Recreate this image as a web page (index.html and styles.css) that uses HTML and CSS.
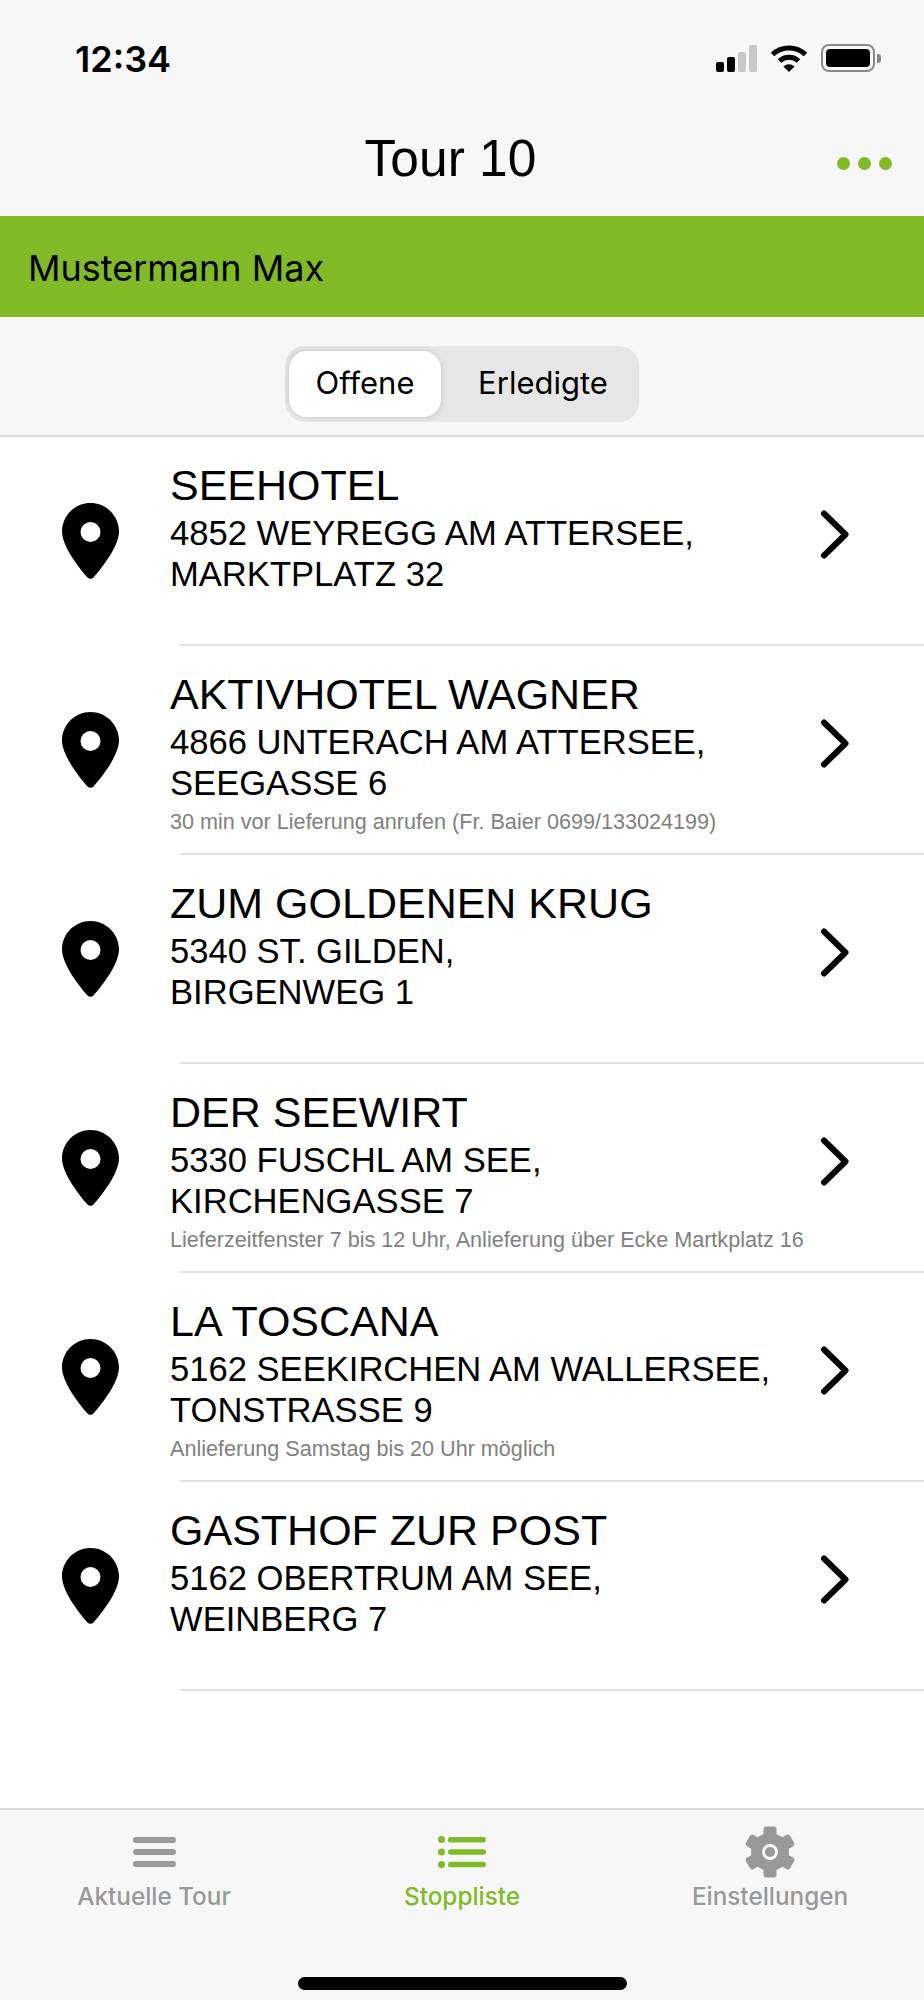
FILE: index.html
```html
<!DOCTYPE html>
<html>
  <head>
    <meta charset="UTF-8" />
    <title>Tour 10</title>
    <link rel="stylesheet" href="styles.css">
  </head>
  <body>
    <div class="app">
      <div class="status-bar">
        <span class="time">12:34</span>
        <div class="status-icons">
          <div class="signal">
            <span class="bar bar-1"></span>
            <span class="bar bar-2"></span>
            <span class="bar bar-3"></span>
            <span class="bar bar-4"></span>
          </div>
          <svg class="wifi" width="38" height="28" viewBox="0 0 38 28">
            <path d="M2.5 10.5A24 24 0 0 1 35.5 10.5" fill="none" stroke="#000" stroke-width="5" />
            <path d="M9.5 17A14 14 0 0 1 28.5 17" fill="none" stroke="#000" stroke-width="5" />
            <path d="M19 28L13.5 22.5A8 8 0 0 1 24.5 22.5Z" fill="#000" />
          </svg>
          <div class="battery"><span class="battery-level"></span></div>
          <span class="battery-nub"></span>
        </div>
      </div>

      <div class="nav-bar">
        <h1>Tour 10</h1>
        <div class="more"><span></span><span></span><span></span></div>
      </div>

      <div class="driver">Mustermann Max</div>

      <div class="filter">
        <div class="segments">
          <div class="segment active">Offene</div>
          <div class="segment">Erledigte</div>
        </div>
      </div>

      <div class="stops">
        <div class="stop">
          <svg class="pin" width="57" height="76" viewBox="0 0 57 76"><use href="#pin-shape" /></svg>
          <div class="stop-text">
            <div class="stop-name">SEEHOTEL</div>
            <div class="stop-address">4852 WEYREGG AM ATTERSEE,<br />MARKTPLATZ 32</div>
          </div>
          <svg class="chevron" width="30" height="49" viewBox="0 0 30 49"><use href="#chevron-shape" /></svg>
        </div>
        <div class="divider"></div>

        <div class="stop">
          <svg class="pin" width="57" height="76" viewBox="0 0 57 76"><use href="#pin-shape" /></svg>
          <div class="stop-text">
            <div class="stop-name">AKTIVHOTEL WAGNER</div>
            <div class="stop-address">4866 UNTERACH AM ATTERSEE,<br />SEEGASSE 6</div>
            <div class="stop-note">30 min vor Lieferung anrufen (Fr. Baier 0699/133024199)</div>
          </div>
          <svg class="chevron" width="30" height="49" viewBox="0 0 30 49"><use href="#chevron-shape" /></svg>
        </div>
        <div class="divider"></div>

        <div class="stop">
          <svg class="pin" width="57" height="76" viewBox="0 0 57 76"><use href="#pin-shape" /></svg>
          <div class="stop-text">
            <div class="stop-name">ZUM GOLDENEN KRUG</div>
            <div class="stop-address">5340 ST. GILDEN,<br />BIRGENWEG 1</div>
          </div>
          <svg class="chevron" width="30" height="49" viewBox="0 0 30 49"><use href="#chevron-shape" /></svg>
        </div>
        <div class="divider"></div>

        <div class="stop">
          <svg class="pin" width="57" height="76" viewBox="0 0 57 76"><use href="#pin-shape" /></svg>
          <div class="stop-text">
            <div class="stop-name">DER SEEWIRT</div>
            <div class="stop-address">5330 FUSCHL AM SEE,<br />KIRCHENGASSE 7</div>
            <div class="stop-note">Lieferzeitfenster 7 bis 12 Uhr, Anlieferung über Ecke Martkplatz 16</div>
          </div>
          <svg class="chevron" width="30" height="49" viewBox="0 0 30 49"><use href="#chevron-shape" /></svg>
        </div>
        <div class="divider"></div>

        <div class="stop">
          <svg class="pin" width="57" height="76" viewBox="0 0 57 76"><use href="#pin-shape" /></svg>
          <div class="stop-text">
            <div class="stop-name">LA TOSCANA</div>
            <div class="stop-address">5162 SEEKIRCHEN AM WALLERSEE,<br />TONSTRASSE 9</div>
            <div class="stop-note">Anlieferung Samstag bis 20 Uhr möglich</div>
          </div>
          <svg class="chevron" width="30" height="49" viewBox="0 0 30 49"><use href="#chevron-shape" /></svg>
        </div>
        <div class="divider"></div>

        <div class="stop">
          <svg class="pin" width="57" height="76" viewBox="0 0 57 76"><use href="#pin-shape" /></svg>
          <div class="stop-text">
            <div class="stop-name">GASTHOF ZUR POST</div>
            <div class="stop-address">5162 OBERTRUM AM SEE,<br />WEINBERG 7</div>
          </div>
          <svg class="chevron" width="30" height="49" viewBox="0 0 30 49"><use href="#chevron-shape" /></svg>
        </div>
        <div class="divider"></div>
      </div>

      <div class="tab-bar">
        <div class="tabs">
          <div class="tab">
            <div class="tab-icon">
              <svg width="43" height="30" viewBox="0 0 43 30" fill="#999">
                <rect x="0" y="0" width="43" height="6" rx="3" />
                <rect x="0" y="12" width="43" height="6" rx="3" />
                <rect x="0" y="24" width="43" height="6" rx="3" />
              </svg>
            </div>
            <span class="tab-label">Aktuelle Tour</span>
          </div>
          <div class="tab tab-active">
            <div class="tab-icon">
              <svg width="48" height="32" viewBox="0 0 48 32" fill="#80ba27">
                <circle cx="3.5" cy="3.5" r="3.5" />
                <circle cx="3.5" cy="16" r="3.5" />
                <circle cx="3.5" cy="28.5" r="3.5" />
                <rect x="10" y="1" width="38" height="5.5" rx="2.7" />
                <rect x="10" y="13.2" width="38" height="5.5" rx="2.7" />
                <rect x="10" y="25.7" width="38" height="5.5" rx="2.7" />
              </svg>
            </div>
            <span class="tab-label">Stoppliste</span>
          </div>
          <div class="tab">
            <div class="tab-icon">
              <svg width="52" height="52" viewBox="-26 -26 52 52" fill="#999">
                <circle r="19" />
                <rect x="-6.5" y="-25.5" width="13" height="14" rx="3" />
                <rect x="-6.5" y="-25.5" width="13" height="14" rx="3" transform="rotate(60)" />
                <rect x="-6.5" y="-25.5" width="13" height="14" rx="3" transform="rotate(120)" />
                <rect x="-6.5" y="-25.5" width="13" height="14" rx="3" transform="rotate(180)" />
                <rect x="-6.5" y="-25.5" width="13" height="14" rx="3" transform="rotate(240)" />
                <rect x="-6.5" y="-25.5" width="13" height="14" rx="3" transform="rotate(300)" />
                <circle r="6.5" fill="none" stroke="#f7f7f7" stroke-width="3" />
              </svg>
            </div>
            <span class="tab-label">Einstellungen</span>
          </div>
        </div>
        <div class="home-indicator"></div>
      </div>
    </div>

    <svg class="defs" width="0" height="0">
      <defs>
        <path id="pin-shape" fill-rule="evenodd" d="M28.5 0C12.8 0 0 12.8 0 28.5C0 43 17 65 25.5 74.5A4 4 0 0 0 31.5 74.5C40 65 57 43 57 28.5C57 12.8 44.2 0 28.5 0ZM28.5 19A10 10 0 1 1 28.5 39A10 10 0 1 1 28.5 19Z" />
        <path id="chevron-shape" d="M4 3.5L25.5 24.5L4 45.5" fill="none" stroke="#000" stroke-width="6" stroke-linecap="round" stroke-linejoin="round" />
      </defs>
    </svg>
  </body>
</html>
```

FILE: styles.css
```css
* {
  box-sizing: border-box;
}

body {
  margin: 0;
  font-family: "Liberation Sans", Arial, sans-serif;
  color: black;
  background-color: white;
}

.app {
  width: 924px;
  height: 2000px;
  display: flex;
  flex-direction: column;
}

.defs {
  display: block;
}

/* top bars */

.status-bar {
  height: 100px;
  padding: 44px 43px 0 75px;
  display: flex;
  justify-content: space-between;
  align-items: flex-start;
  background-color: #f7f7f7;
}

.time {
  font-family: Inter, sans-serif;
  font-size: 36px;
  font-weight: 600;
  line-height: 30px;
}

.status-icons {
  display: flex;
  align-items: center;
  height: 28px;
}

.signal {
  display: flex;
  align-items: flex-end;
  gap: 3px;
  height: 28px;
  margin-right: 13px;
}

.bar {
  width: 8px;
  border-radius: 2px;
  background-color: black;
}

.bar-1 {
  height: 10px;
}

.bar-2 {
  height: 15px;
}

.bar-3 {
  height: 20px;
  background-color: #c8c8c8;
}

.bar-4 {
  height: 27px;
  background-color: #c8c8c8;
}

.wifi {
  margin-right: 13px;
}

.battery {
  width: 54px;
  height: 28px;
  padding: 3px;
  border: 2px solid #8a8a8a;
  border-radius: 8px;
}

.battery-level {
  display: block;
  height: 100%;
  border-radius: 4px;
  background-color: black;
}

.battery-nub {
  width: 4px;
  height: 9px;
  margin-left: 2px;
  border-radius: 0 3px 3px 0;
  background-color: #8a8a8a;
}

.nav-bar {
  height: 116px;
  display: flex;
  justify-content: center;
  position: relative;
  background-color: #f7f7f7;
}

h1 {
  margin: 0 23px 0 0;
  font-size: 51.5px;
  font-weight: normal;
  line-height: 116px;
  height: 116px;
}

.more {
  position: absolute;
  right: 32px;
  top: 57px;
  display: flex;
  gap: 8px;
}

.more span {
  width: 13px;
  height: 13px;
  border-radius: 50%;
  background-color: #80ba27;
}

.driver {
  height: 101px;
  padding: 3px 0 0 28px;
  font-family: Inter, sans-serif;
  font-size: 36px;
  line-height: 98px;
  background-color: #80ba27;
}

.filter {
  height: 120px;
  padding-top: 29px;
  display: flex;
  justify-content: center;
  background-color: #f7f7f7;
  border-bottom: 2px solid #dcdcdc;
}

.segments {
  width: 354px;
  height: 76px;
  padding: 5px 4px;
  display: flex;
  border-radius: 20px;
  background-color: #e6e6e6;
}

.segment {
  flex: 1;
  padding-left: 10px;
  font-family: Inter, sans-serif;
  font-size: 31px;
  line-height: 64px;
  text-align: center;
}

.segment.active {
  flex: 0 0 152px;
  padding-left: 0;
  border-radius: 18px;
  background-color: white;
  box-shadow: -2px -2px 4px rgba(0, 0, 0, 0.08), 2px 2px 4px rgba(0, 0, 0, 0.08);
}

/* stop list */

.stops {
  flex: 1;
}

.stop {
  height: 207px;
  display: flex;
  align-items: center;
}

.pin {
  margin-left: 62px;
  flex: none;
}

.stop-text {
  width: 650px;
  margin-left: 51px;
  padding-top: 23px;
  align-self: stretch;
}

.stop-name {
  font-size: 43px;
  line-height: 50px;
}

.stop-address {
  font-size: 34.6px;
  line-height: 41px;
  margin-top: 3px;
}

.stop-note {
  font-size: 21.6px;
  line-height: 28px;
  margin-top: 4px;
  color: #808080;
}

.chevron {
  flex: none;
  margin-bottom: 13px;
}

.divider {
  height: 2px;
  margin-left: 180px;
  background-color: #e2e2e2;
}

/* bottom tabs */

.tab-bar {
  height: 192px;
  display: flex;
  flex-direction: column;
  align-items: center;
  background-color: #f7f7f7;
  border-top: 2px solid #d8d8d8;
}

.tabs {
  width: 100%;
  padding-top: 16px;
  display: grid;
  grid-template-columns: repeat(3, 1fr);
}

.tab {
  display: flex;
  flex-direction: column;
  align-items: center;
  color: #999;
}

.tab-active {
  color: #80ba27;
}

.tab-icon {
  height: 52px;
  display: flex;
  align-items: center;
  justify-content: center;
}

.tab-label {
  margin-top: 3px;
  font-family: Inter, sans-serif;
  font-size: 24.3px;
  font-weight: 500;
  line-height: 30px;
}

.home-indicator {
  width: 329px;
  height: 13px;
  margin-top: 66px;
  border-radius: 7px;
  background-color: black;
}
```
